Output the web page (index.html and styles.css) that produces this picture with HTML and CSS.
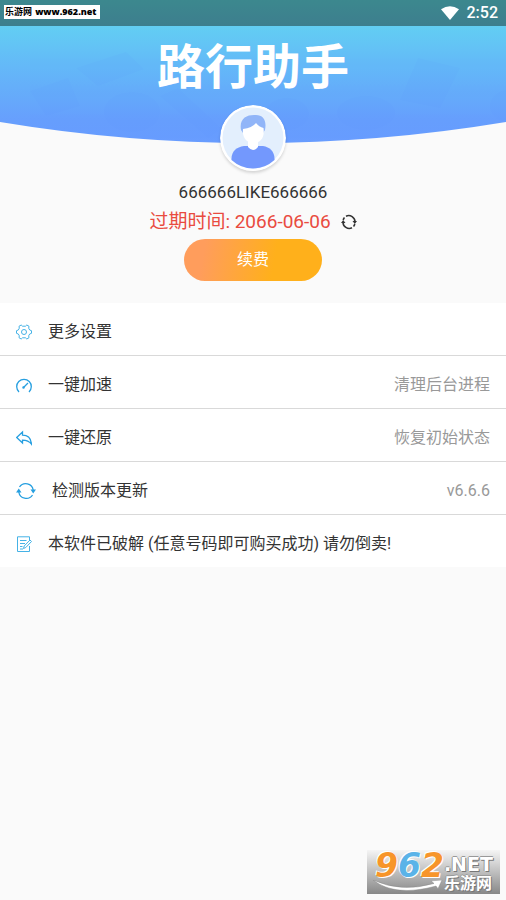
FILE: index.html
```html
<!DOCTYPE html>
<html lang="zh-CN">
<head>
<meta charset="utf-8">
<meta name="viewport" content="width=device-width, initial-scale=1">
<title>路行助手</title>
<link rel="stylesheet" href="styles.css">
</head>
<body>
<div class="status-bar">
  <span class="site-tag">乐游网 <b class="site-url">www.962.net</b></span>
  <span class="status-right">
    <svg class="wifi" width="18" height="14" viewBox="0 0 18 14" aria-hidden="true"><path d="M0 3.2Q9-2.8 18 3.2L9 14Z" fill="#fff"/></svg>
    <time>2:52</time>
  </span>
</div>

<header class="hero">
  <svg class="hero-bg" viewBox="0 0 506 118" preserveAspectRatio="none" aria-hidden="true">
    <defs>
      <linearGradient id="sky" x1="0" y1="0" x2="0" y2="1">
        <stop offset="0" stop-color="#62cef3"/>
        <stop offset=".35" stop-color="#64b8f8"/>
        <stop offset=".8" stop-color="#679ffd"/>
        <stop offset="1" stop-color="#689cff"/>
      </linearGradient>
      <clipPath id="bowl"><path d="M0 0H506V96Q253 138 0 96Z"/></clipPath>
    </defs>
    <g clip-path="url(#bowl)">
      <rect width="506" height="118" fill="url(#sky)"/>
      <g fill="#5b8cff" opacity=".07">
        <ellipse cx="132" cy="86" rx="28" ry="20"/>
        <ellipse cx="366" cy="87" rx="29" ry="17"/>
        <ellipse cx="287" cy="88" rx="22" ry="16"/>
        <ellipse cx="508" cy="80" rx="18" ry="16"/>
        <path d="M160 70L178 62L222 103L208 112ZM418 32L460 42L440 82L400 74ZM76 42L126 26L144 43L98 60ZM30 65L68 52L80 80L46 90Z"/>
      </g>
    </g>
  </svg>
  <h1 class="title">路行助手</h1>
</header>

<section class="profile">
  <svg class="avatar" width="66" height="66" viewBox="0 0 66 66" role="img" aria-label="头像">
    <circle cx="33" cy="33" r="33" fill="#fff"/>
    <circle cx="33" cy="33" r="30.5" fill="#e3effd"/>
    <path d="M11.500 55C11 47 16 42 24 41H43C50 42 55 47 54.500 55Q45 63.500 33 63.500T11.500 55Z" fill="#7398fd"/>
    <path d="M28 35H38V42Q33 48 28 42Z" fill="#fff"/>
    <path d="M21 25C19 14 26 10 34 10C43 9 47 15 45 25L43 28H23Z" fill="#91b5f8"/>
    <path d="M23 24Q32 23 36 18Q39 22 43.500 23C45 33 40 38 33.500 38C27 38 22 33 23 24Z" fill="#fff"/>
  </svg>
  <p class="user">666666LIKE666666</p>
  <div class="expiry">
    <span>过期时间: 2066-06-06</span>
    <button class="refresh" type="button" aria-label="刷新">
      <svg width="16" height="16" viewBox="0 0 16 16" fill="none" stroke="#333" stroke-width="1.600" aria-hidden="true">
        <path d="M5 2.200A6.300 6.300 0 0 1 14 8M11 13.800A6.300 6.300 0 0 1 2 8M2.200 6A6.300 6.300 0 0 1 3.500 3.500M13.800 10A6.300 6.300 0 0 1 12.500 12.500"/>
        <path d="M11.500 7H16L13.800 10ZM0 9H4.500L2.200 6Z" fill="#333" stroke="none"/>
      </svg>
    </button>
  </div>
  <button class="renew" type="button">续费</button>
</section>

<nav>
  <ul class="menu">
    <li><a class="row" href="#settings">
      <svg class="icon" viewBox="0 0 16 16" aria-hidden="true"><path d="M5.200 1L6.500 2.200H9.500L10.800 1L13 2.300L12.700 4.200L13.700 6L15.500 6.700V9.300L13.700 10L12.700 11.800L13 13.700L10.800 15L9.500 13.800H6.500L5.200 15L3 13.700L3.300 11.800L2.300 10L.5 9.300V6.700L2.300 6L3.300 4.200L3 2.300Z"/><circle cx="8" cy="8" r="2.500"/></svg>
      <span>更多设置</span>
    </a></li>
    <li><a class="row" href="#boost">
      <svg class="icon icon-strong" viewBox="0 0 16 16" aria-hidden="true"><path d="M3 15A7.300 7.300 0 1 1 13 15M7.500 10.500L12 6"/><circle cx="7.500" cy="10.500" r=".6"/></svg>
      <span>一键加速</span><span class="note">清理后台进程</span>
    </a></li>
    <li><a class="row" href="#restore">
      <svg class="icon icon-strong" viewBox="0 0 16 16" aria-hidden="true"><path d="M.7 7.500L6.500 2V5.200C12 5.200 15 8.500 15.500 14.200C13 11 10.500 10.200 6.500 10.200V13Z"/></svg>
      <span>一键还原</span><span class="note">恢复初始状态</span>
    </a></li>
    <li><a class="row" href="#update">
      <svg class="icon icon-wide icon-strong" viewBox="0 0 20 18" aria-hidden="true"><path d="M3.500 5A7.500 7.500 0 0 1 17.200 8M16.500 13A7.500 7.500 0 0 1 2.800 10"/><path class="solid" d="M14.500 7.500H20L17.200 11.500ZM0 10.500H5.500L2.800 6.500Z"/></svg>
      <span>检测版本更新</span><span class="note">v6.6.6</span>
    </a></li>
    <li><a class="row" href="#notice">
      <svg class="icon" viewBox="0 0 16 16" aria-hidden="true"><path d="M13.500 10V15.500H1.500V.8H13.500V4M4 4.500H10.500M4 7.500H9M4 10.500H6.500M7.500 12.500L8.200 10L14 4L15.500 5.500L9.800 11.500ZM4 13H7"/></svg>
      <span>本软件已破解 (任意号码即可购买成功) 请勿倒卖!</span>
    </a></li>
  </ul>
</nav>

<aside class="brand" aria-label="962.NET 乐游网">
  <span class="brand-number">9<span class="brand-six">6</span>2</span>
  <span class="brand-side"><span class="brand-net">.NET</span><span class="brand-name">乐游网</span></span>
  <svg class="swoosh" width="70" height="13" viewBox="0 0 70 15" preserveAspectRatio="none" aria-hidden="true"><path d="M0 0Q28 15 61 4L58 1L69 0L65 10L63 7Q22 20 0 0Z" fill="#fff" stroke="#888" stroke-width=".5"/></svg>
</aside>
</body>
</html>
```

FILE: styles.css
```css
* {
  box-sizing: border-box;
}

body {
  position: relative;
  min-height: 100vh;
  margin: 0;
  background: #fafafa;
  color: #333;
  font: 16px/24px Roboto, "Noto Sans CJK SC", sans-serif;
}

h1,
p,
ul {
  margin: 0;
  padding: 0;
}

button {
  border: 0;
  font: inherit;
  cursor: pointer;
}

.status-bar {
  display: flex;
  align-items: center;
  justify-content: space-between;
  height: 26px;
  padding: 0 8px 0 4px;
  background: linear-gradient(#3c888e, #3d7e8e);
}

.site-tag {
  margin-bottom: 2px;
  padding: 0 4px 0 1px;
  background: #fff;
  color: #000;
  font: bold 9px/14px "DejaVu Sans", "Noto Sans CJK SC", sans-serif;
  white-space: nowrap;
}

.site-url {
  font-family: "Open Sans", sans-serif;
  font-size: 9px;
}

.status-right {
  display: flex;
  align-items: center;
  gap: 8px;
  color: #fff;
  font-size: 16px;
  font-weight: 500;
}

.hero {
  display: grid;
  height: 118px;
}

.hero-bg,
.title {
  grid-area: 1 / 1;
}

.hero-bg {
  width: 100%;
  height: 118px;
}

.title {
  z-index: 1;
  padding-top: 10px;
  color: #fff;
  font-size: 48px;
  font-weight: 700;
  line-height: 64px;
  text-align: center;
}

.profile {
  display: flex;
  flex-direction: column;
  align-items: center;
  margin-top: -39px;
  padding-bottom: 22px;
}

.avatar {
  z-index: 1;
  border-radius: 50%;
  box-shadow: 0 2px 3px rgba(0, 0, 0, 0.15);
}

.user {
  margin-top: 9px;
  font-size: 17px;
}

.expiry {
  display: flex;
  align-items: center;
  gap: 10px;
  margin: 6px 0 5px;
  color: #e94b40;
  font-size: 19px;
}

.refresh {
  display: flex;
  padding: 0;
  background: none;
}

.renew {
  width: 138px;
  height: 42px;
  border-radius: 21px;
  background: linear-gradient(100deg, #ff9d5c 15%, #ffb01b 65%);
  color: #fff;
}

.menu {
  background: #fff;
  list-style: none;
}

.menu li + li {
  border-top: 1px solid #d9d9d9;
}

.row {
  display: flex;
  align-items: center;
  gap: 16px;
  min-height: 52px;
  padding: 5px 16px 0;
  color: #333;
  text-decoration: none;
}

.icon {
  flex: none;
  width: 16px;
  height: 16px;
  fill: none;
  stroke: #45b2e6;
  stroke-width: 1;
}

.icon-wide {
  width: 20px;
  height: 18px;
}

.icon-strong {
  stroke: #269fe0;
  stroke-width: 1.3;
}

.solid {
  fill: #269fe0;
  stroke: none;
}

.note {
  margin-left: auto;
  color: #999;
}

.brand {
  position: absolute;
  right: 6px;
  bottom: 6px;
  display: flex;
  width: 133px;
  height: 44px;
  padding: 3px 2px 0 8px;
  background: linear-gradient(#f5f5f5, #888);
  font-family: "DejaVu Sans", "Noto Sans CJK SC", sans-serif;
  font-weight: bold;
}

.brand-number {
  color: #f7952a;
  font-size: 33px;
  font-style: italic;
  line-height: 26px;
  text-shadow: 1px 1px #fff, -1px -1px #fff;
}

.brand-six {
  color: #5ab3e8;
}

.brand-side {
  display: flex;
  flex-direction: column;
  color: #fff;
  text-shadow: 1px 1px #777, -1px 0 #999, 0 -1px #999;
}

.brand-net {
  font-size: 19px;
  line-height: 22px;
}

.brand-name {
  font-size: 16px;
  line-height: 18px;
}

.swoosh {
  position: absolute;
  bottom: 1px;
  left: 6px;
}
```
